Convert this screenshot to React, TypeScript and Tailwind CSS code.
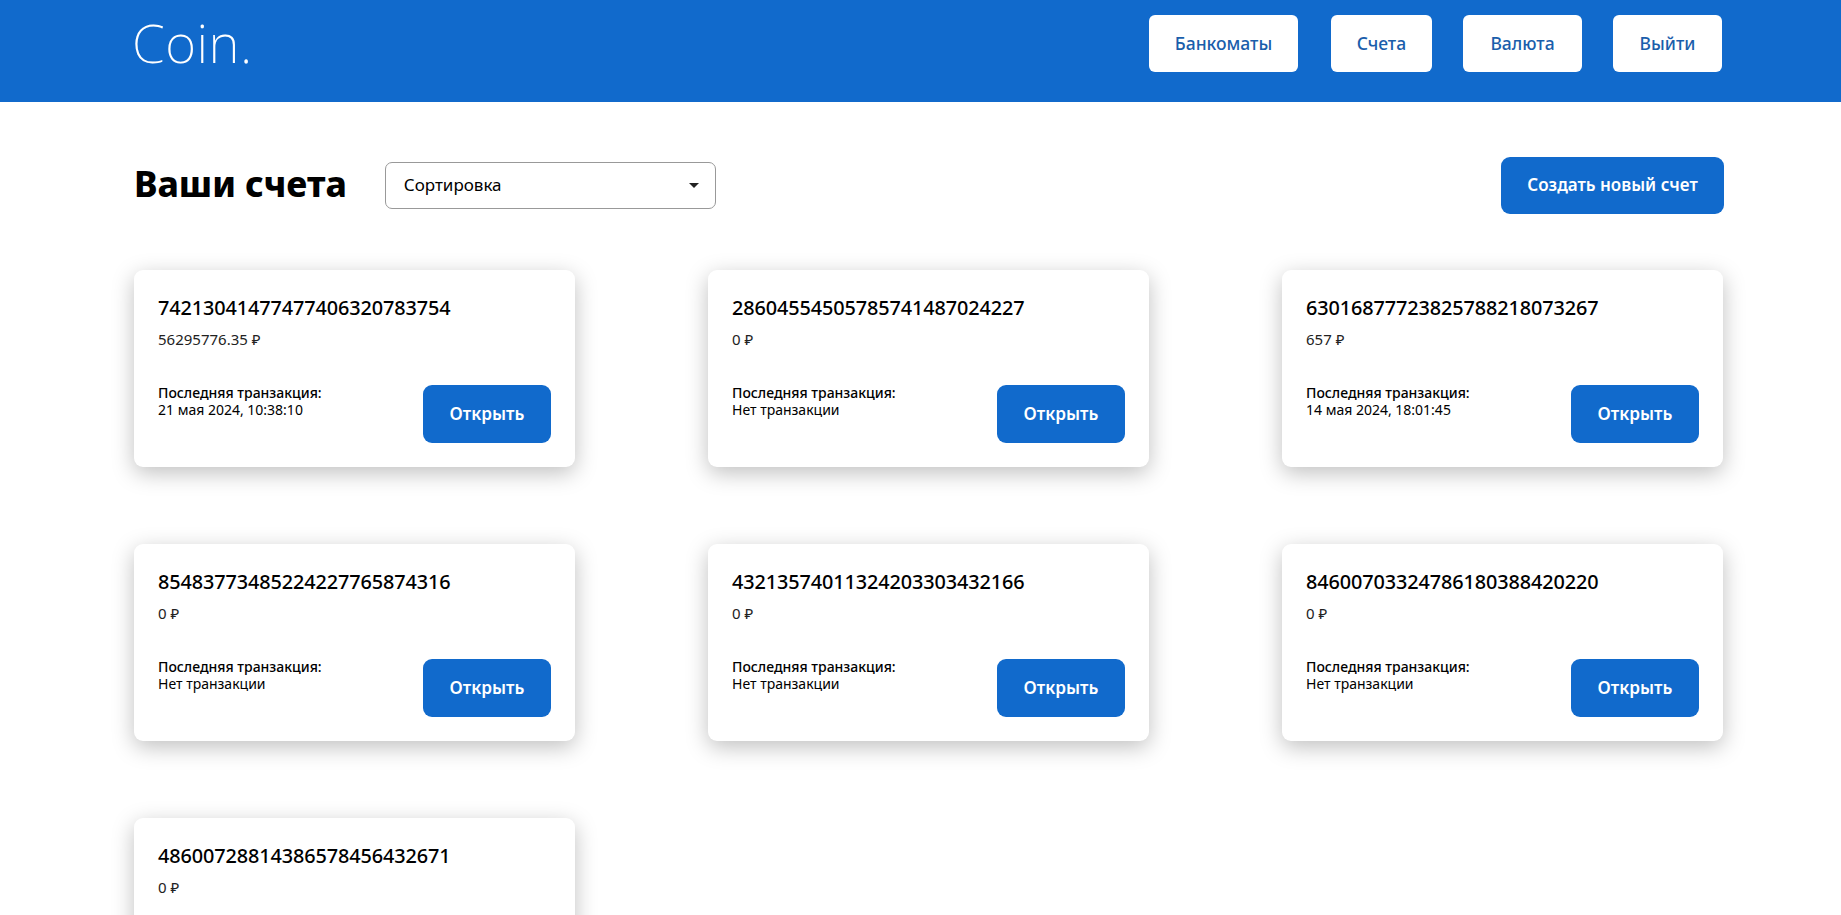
const accounts = [
  ["74213041477477406320783754", "56295776.35 ₽", "21 мая 2024, 10:38:10"],
  ["28604554505785741487024227", "0 ₽", "Нет транзакции"],
  ["63016877723825788218073267", "657 ₽", "14 мая 2024, 18:01:45"],
  ["85483773485224227765874316", "0 ₽", "Нет транзакции"],
  ["43213574011324203303432166", "0 ₽", "Нет транзакции"],
  ["84600703324786180388420220", "0 ₽", "Нет транзакции"],
  ["48600728814386578456432671", "0 ₽", "Нет транзакции"],
];

const nav = [
  { label: "Банкоматы", w: "w-[149px] mr-[2px]" },
  { label: "Счета", w: "w-[101px]" },
  { label: "Валюта", w: "w-[119px]" },
  { label: "Выйти", w: "w-[109px]" },
];

function Card({ id, balance, last }: { id: string; balance: string; last: string }) {
  return (
    <div className="h-[197px] w-[441px] rounded-[9px] bg-white pt-[26px] pr-[24px] pb-[24px] pl-[24px] shadow-[0_6px_22px_rgba(0,0,0,0.25)] flex flex-col">
      <div className="text-[19.85px] leading-[24px] font-medium tracking-[-0.1px] text-black">{id}</div>
      <div className="mt-[10px] text-[15px] leading-[18px] text-[#222]">{balance}</div>
      <div className="mt-auto flex items-end justify-between">
        <div className="pb-[25px] text-[14px] leading-[17px] text-black">
          <div className="font-medium">Последняя транзакция:</div>
          <div>{last}</div>
        </div>
        <button className="h-[58px] w-[128px] rounded-[9px] bg-[#116acc] pb-[1px] text-[17.2px] font-semibold text-white">Открыть</button>
      </div>
    </div>
  );
}

export default function App() {
  return (
    <div className="min-h-[915px] bg-white font-['Noto_Sans','Liberation_Sans',sans-serif]">
      <header className="h-[102px] bg-[#116acc]">
        <div className="ml-[132px] mr-[119px] flex items-start justify-between pt-[15px]">
          <div className="text-[53px] leading-[56px] font-extralight tracking-[0.5px] text-white">Coin.</div>
          <nav className="flex gap-[31px]">
            {nav.map((n) => (
              <button key={n.label} className={`h-[57px] rounded-[6px] bg-white text-[17.5px] font-medium text-[#1a5eab] ${n.w}`}>{n.label}</button>
            ))}
          </nav>
        </div>
      </header>
      <main className="ml-[134px] mr-[117px] pt-[55px]">
        <div className="flex items-center">
          <h1 className="pb-[4px] text-[35.2px] leading-[53px] font-extrabold text-black">Ваши счета</h1>
          <div className="ml-[38px] flex h-[47px] w-[331px] items-center justify-between rounded-[7px] border border-[#999] pb-[2px] pl-[18px] pr-[16px] text-[17px] text-black">
            <span>Сортировка</span>
            <span className="mt-[2px] h-0 w-0 border-x-[5px] border-t-[5px] border-x-transparent border-t-[#222]" />
          </div>
          <button className="ml-auto h-[57px] w-[223px] rounded-[9px] bg-[#116acc] pb-[1px] text-[17px] font-semibold text-white">Создать новый счет</button>
        </div>
        <div className="mt-[56px] grid grid-cols-[441px_441px_441px] gap-x-[133px] gap-y-[77px]">
          {accounts.map((a) => (
            <Card key={a[0]} id={a[0]} balance={a[1]} last={a[2]} />
          ))}
        </div>
      </main>
    </div>
  );
}
